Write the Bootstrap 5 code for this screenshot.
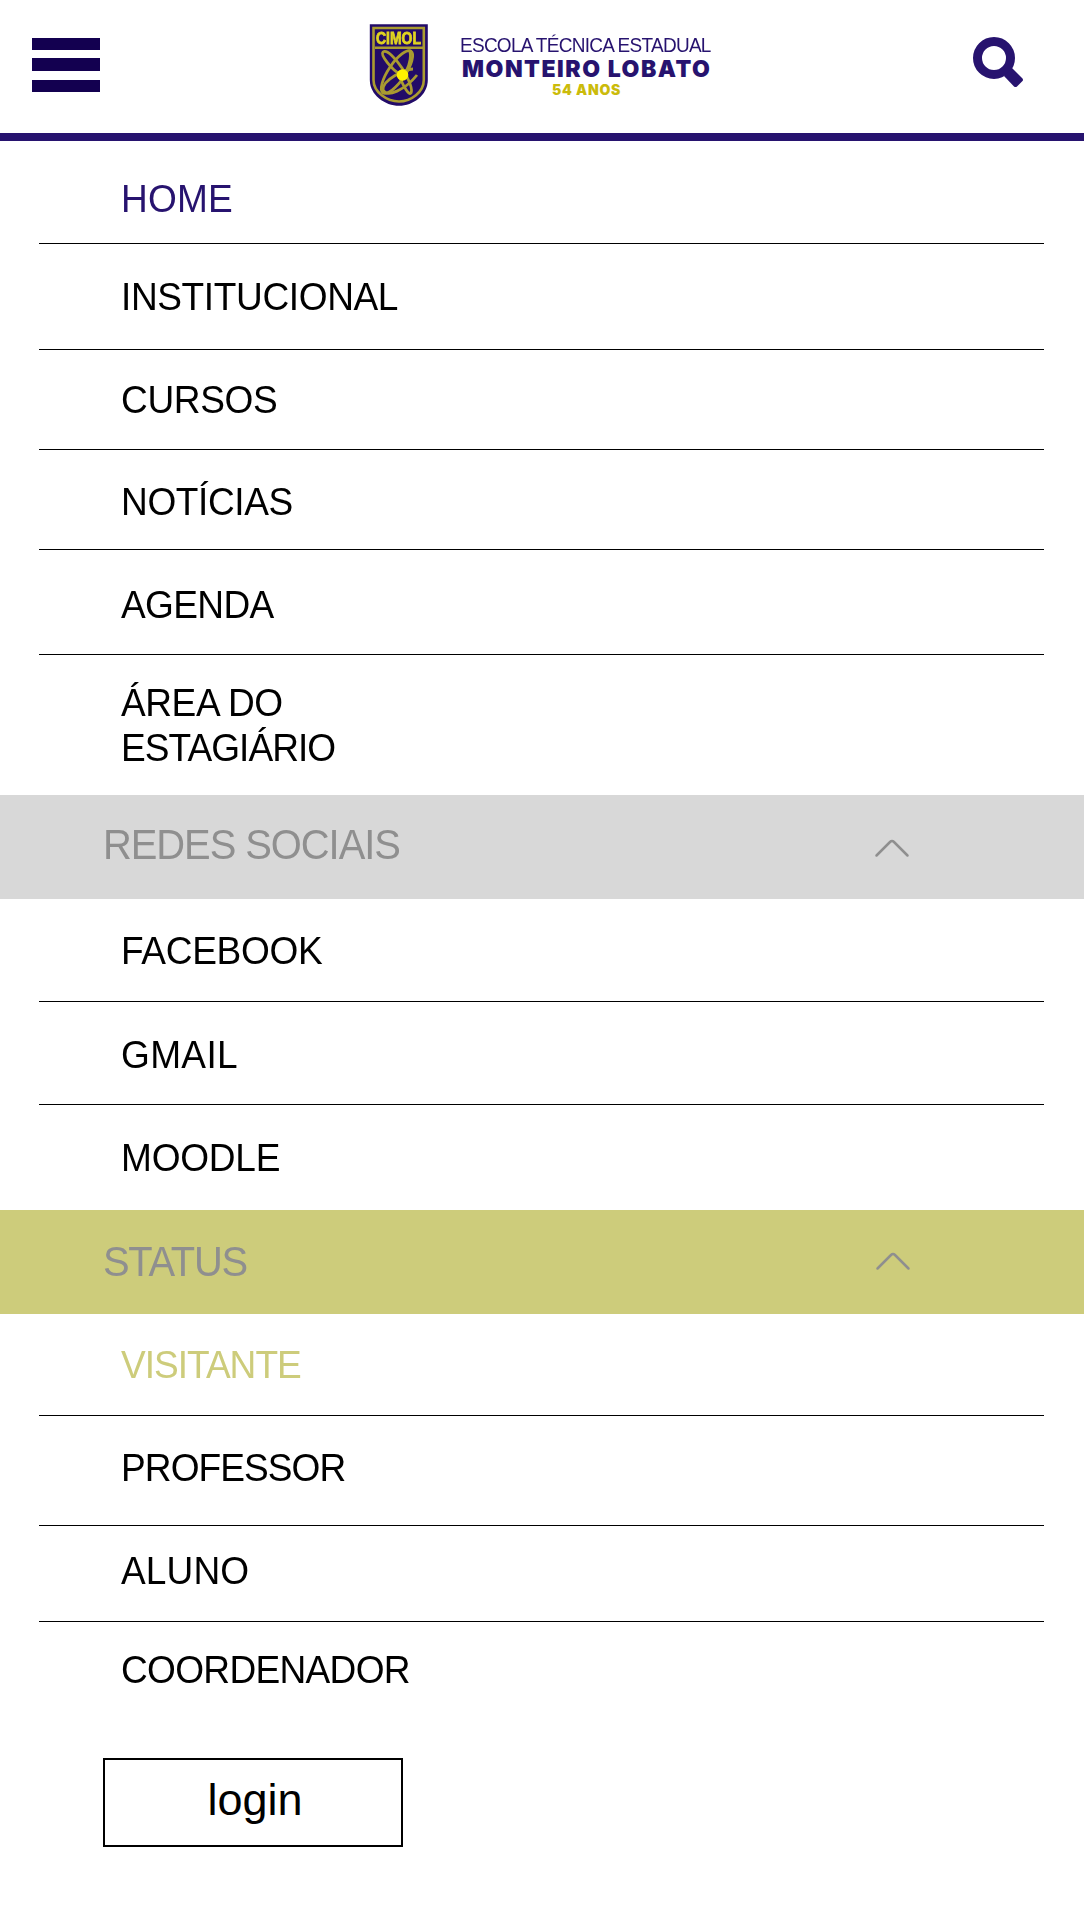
<!DOCTYPE html>
<html lang="pt-BR">
<head>
<meta charset="utf-8">
<meta name="viewport" content="width=device-width, initial-scale=1">
<title>CIMOL - Menu</title>
<link href="https://cdn.jsdelivr.net/npm/bootstrap@5.3.0/dist/css/bootstrap.min.css" rel="stylesheet">
<style>
  :root { --navy: #27136f; --olive: #cdcc7b; --grey: #d8d8d8; --muted: #8f8f8f; }
  body { font-family: "Liberation Sans", Arial, sans-serif; color: #000; background: #fff; }
  .topbar { height: 141px; border-bottom: 8px solid var(--navy); }
  .menu-btn { width: 68px; margin: 38px 0 0 32px; }
  .menu-btn span { display: block; height: 12px; background: #130050; margin-bottom: 9px; }
  .menu-btn span:nth-child(1) { margin-bottom: 8px; }
  .menu-btn span:nth-child(2) { height: 13px; }
  .crest { margin: 23px 0 0 269px; filter: blur(.4px); }
  .school { width: 252px; margin: 34px 0 0 30px; color: var(--navy); white-space: nowrap; }
  .school-type { font-size: 20px; line-height: 22px; letter-spacing: -.77px; }
  .school-name { font: 900 23px/24px Inter, sans-serif; letter-spacing: 1.53px; margin: 1px 0 1px 2px; }
  .school-age { font: 900 14px/16px Inter, sans-serif; letter-spacing: .72px; color: #cbbb0b; margin-left: 92px; }
  .search-btn { margin: 35px 59px 0 auto; }

  /* slightly condensed capitals */
  .slim { display: inline-block; transform: scaleX(.95); transform-origin: 0 50%; }
  .school-type.slim { display: block; }

  .menu-list { padding: 0 40px 0 39px; }
  .menu-list a {
    display: block; color: #000; text-decoration: none; font-size: 39px; line-height: 45px;
    height: var(--h); padding: var(--t) 0 0 82px; letter-spacing: var(--ls, 0);
    border-bottom: 1px solid #000; white-space: nowrap;
  }
  .menu-list a:last-child { border-bottom: 0; }
  .menu-list a.current { color: var(--navy); }
  .menu-list a.picked { color: var(--olive); }
  .section-bar { height: 104px; color: var(--muted); font-size: 42px; line-height: 45px; padding-left: 103px; white-space: nowrap; }
  .section-bar svg { margin-left: auto; }
  .bar-social { background: var(--grey); padding-top: 27px; letter-spacing: -1.1px; }
  .bar-social svg { margin-right: 174px; margin-top: 16px; }
  .bar-status { background: var(--olive); padding-top: 29px; letter-spacing: -1.35px; }
  .bar-status svg { margin-right: 173px; margin-top: 12px; }

  .home { --h: 103px; --t: 35px; --ls: .2px; }
  .inst { --h: 106px; --t: 30px; --ls: -.4px; }
  .curs { --h: 100px; --t: 27px; --ls: -.4px; }
  .noti { --h: 100px; --t: 29px; --ls: -.4px; }
  .agen { --h: 105px; --t: 32px; --ls: -.68px; }
  .area { --h: 140px; --t: 25px; --ls: -.45px; }
  .area .line2 { letter-spacing: -1px; }
  .face { --h: 103px; --t: 29px; --ls: -.32px; }
  .gmai { --h: 103px; --t: 30px; --ls: .35px; }
  .mood { --h: 105px; --t: 30px; --ls: -.25px; }
  .visi { --h: 102px; --t: 28px; --ls: -1.05px; }
  .prof { --h: 110px; --t: 29px; --ls: -.97px; }
  .alun { --h: 96px; --t: 22px; --ls: .14px; }
  .coor { --h: 136px; --t: 25px; --ls: -.72px; }

  .login-btn {
    width: 300px; height: 89px; margin-left: 103px; padding: 0 0 6px 4px;
    border: 2px solid #000; border-radius: 0; color: #000; font-size: 45px; line-height: 1;
  }
</style>
</head>
<body>
<header class="topbar d-flex align-items-start">
  <div class="menu-btn" role="button" aria-label="Menu"><span></span><span></span><span></span></div>
  <svg class="crest flex-shrink-0" width="61" height="84" viewBox="0 0 61 84" aria-hidden="true">
    <path d="M.8 1.200H58.800V57C58.800 72 44 82.800 30 82.800S.8 72 .8 57Z" fill="#220b68"/>
    <path d="M4.500 5H54.800V57C54.800 69 42 78.500 30 78.500S4.500 69 4.500 57Z" fill="none" stroke="#aa9c30" stroke-width="2.600"/>
    <path d="M6 24.800H54" stroke="#aa9c30" stroke-width="2.600"/>
    <text x="29.500" y="20.500" text-anchor="middle" textLength="45" lengthAdjust="spacingAndGlyphs" font-family="Liberation Sans" font-weight="700" font-size="16" fill="#e0d420" stroke="#e0d420" stroke-width=".8">CIMOL</text>
    <g fill="none" stroke="#a99b30" stroke-width="2.800">
      <ellipse cx="28" cy="49" rx="8.500" ry="25" transform="rotate(34 28 49)"/>
      <path d="M31 51C23 47 11 32 14 29C18 26 27 36 33 45C39 55 44 66 42 70C40 73 35 64 31 55"/>
      <path d="M44 46C36 46 13 57 14 67C18 75 36 67 48 52"/>
      <path d="M40 27C43 31 41 41 37 49"/>
    </g>
    <circle cx="33.500" cy="52" r="5.800" fill="#fff200"/>
  </svg>
  <div class="school">
    <div class="school-type slim">ESCOLA TÉCNICA ESTADUAL</div>
    <div class="school-name">MONTEIRO LOBATO</div>
    <div class="school-age">54 ANOS</div>
  </div>
  <svg class="search-btn flex-shrink-0" width="53" height="54" viewBox="0 0 53 54" role="img" aria-label="Buscar">
    <circle cx="22" cy="23" r="16.500" fill="none" stroke="#27136f" stroke-width="9"/>
    <path d="M40 33L50.500 43.500Q51.500 45 50.500 46L45 51.500Q43.500 52.500 42 51.500L32 41Z" fill="#27136f"/>
  </svg>
</header>

<nav>
  <div class="menu-list">
    <a class="home current" href="#"><span class="slim">HOME</span></a>
    <a class="inst" href="#"><span class="slim">INSTITUCIONAL</span></a>
    <a class="curs" href="#"><span class="slim">CURSOS</span></a>
    <a class="noti" href="#"><span class="slim">NOTÍCIAS</span></a>
    <a class="agen" href="#"><span class="slim">AGENDA</span></a>
    <a class="area" href="#"><span class="slim">ÁREA DO<br><span class="line2">ESTAGIÁRIO</span></span></a>
  </div>
  <div class="section-bar bar-social d-flex align-items-start"><span class="slim">REDES SOCIAIS</span>
    <svg width="36" height="20" viewBox="0 0 36 20"><path d="M2.500 17.500L16 4Q18 2 20 4L33.500 17.500" fill="none" stroke="#8f8f8f" stroke-width="2.500" stroke-linecap="round"/></svg>
  </div>
  <div class="menu-list">
    <a class="face" href="#"><span class="slim">FACEBOOK</span></a>
    <a class="gmai" href="#"><span class="slim">GMAIL</span></a>
    <a class="mood" href="#"><span class="slim">MOODLE</span></a>
  </div>
  <div class="section-bar bar-status d-flex align-items-start"><span class="slim">STATUS</span>
    <svg width="36" height="20" viewBox="0 0 36 20"><path d="M2.500 17.500L16 4Q18 2 20 4L33.500 17.500" fill="none" stroke="#8f8f8f" stroke-width="2.500" stroke-linecap="round"/></svg>
  </div>
  <div class="menu-list">
    <a class="visi picked" href="#"><span class="slim">VISITANTE</span></a>
    <a class="prof" href="#"><span class="slim">PROFESSOR</span></a>
    <a class="alun" href="#"><span class="slim">ALUNO</span></a>
    <a class="coor" href="#"><span class="slim">COORDENADOR</span></a>
  </div>
</nav>
<button class="btn login-btn" type="button">login</button>
<script src="https://cdn.jsdelivr.net/npm/bootstrap@5.3.0/dist/js/bootstrap.bundle.min.js"></script>
</body>
</html>
